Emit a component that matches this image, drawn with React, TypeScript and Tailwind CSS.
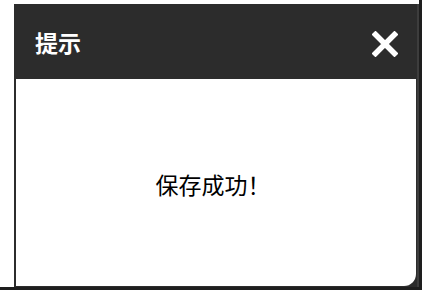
export default function App() {
  return (
    <div className="w-[422px] h-[290px] bg-white flex flex-col overflow-hidden font-['Noto_Sans_CJK_SC','Noto_Sans',sans-serif]">
      <div className="flex flex-1 min-h-0">
        <div className="flex-1 pl-[14px] pt-[4px] flex">
          <div className="flex-1 flex flex-col bg-[#2c2c2c]">
            <div className="h-[75px] flex items-center justify-between pl-[21px] pr-[19px]">
              <span className="text-white text-[23px] font-bold leading-none mt-[1px]">提示</span>
              <svg width="26" height="26" viewBox="0 0 26 26" className="mt-[5px]">
                <path d="M3.5 3.5 L22.5 22.5 M22.5 3.5 L3.5 22.5" stroke="#fff" strokeWidth="5.5" strokeLinecap="square" />
              </svg>
            </div>
            <div className="flex-1 flex pl-[2px] pb-[1px]">
              <div className="flex-1 bg-white rounded-br-[12px] flex items-center justify-center">
                <span className="text-[23px] text-black leading-none ml-[-6px] mt-[3px]">保存成功！</span>
              </div>
              <div className="w-[1px]" />
            </div>
          </div>
          <div className="w-[2px] bg-[#3d3d3d]" />
        </div>
        <div className="w-[3px] bg-[#1e1e1e]" />
      </div>
      <div className="h-[3px] bg-[#1e1e1e]" />
    </div>
  );
}
